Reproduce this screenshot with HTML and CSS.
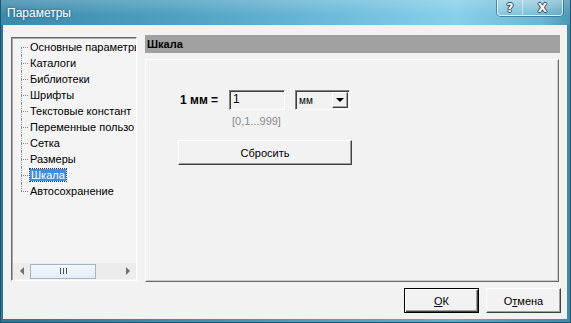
FILE: index.html
```html
<!DOCTYPE html>
<html lang="ru">
<head>
  <meta charset="UTF-8" />
  <title>Параметры</title>
  <link rel="stylesheet" href="styles.css">
</head>
<body>
  <div class="window">
    <!-- Title bar -->
    <div class="titlebar">
      <span class="title">Параметры</span>
      <div class="caption-buttons">
        <span class="cap-btn cap-help">?</span>
        <span class="cap-btn cap-close">X</span>
      </div>
    </div>

    <div class="client">
      <div class="main">
        <!-- Left tree with options -->
        <div class="tree">
          <ul class="tree-list">
            <li>Основные параметры</li>
            <li>Каталоги</li>
            <li>Библиотеки</li>
            <li>Шрифты</li>
            <li>Текстовые констант</li>
            <li>Переменные пользо</li>
            <li>Сетка</li>
            <li>Размеры</li>
            <li><span class="selected">Шкала</span></li>
            <li class="last">Автосохранение</li>
          </ul>
          <div class="hscroll">
            <span class="arrow arrow-left"></span>
            <span class="thumb"><span class="grip"></span></span>
            <span class="track"></span>
            <span class="arrow arrow-right"></span>
          </div>
        </div>

        <!-- Page of the selected item -->
        <div class="page">
          <div class="page-header">Шкала</div>
          <div class="page-box">
            <div class="scale-row">
              <span class="scale-label">1 мм =</span>
              <span class="field">1</span>
              <span class="combo">
                <span class="combo-text">мм</span>
                <span class="combo-btn"></span>
              </span>
            </div>
            <div class="hint">[0,1...999]</div>
            <button class="btn btn-reset">Сбросить</button>
          </div>
        </div>
      </div>

      <div class="footer">
        <button class="btn btn-default"><u>О</u>К</button>
        <button class="btn">О<u>т</u>мена</button>
      </div>
    </div>
  </div>
</body>
</html>
```

FILE: styles.css
```css
* {
  box-sizing: border-box;
  margin: 0;
  padding: 0;
}

body {
  font-family: "Liberation Sans", Arial, sans-serif;
  font-size: 11px;
  color: #000;
  background: #fff;
}

/* Window frame */
.window {
  width: 571px;
  height: 323px;
  display: flex;
  flex-direction: column;
  background: linear-gradient(to right, #2f7594 0%, #4b97b8 45%, #5eaccb 80%, #3f89a9 100%);
  border-left: 1px solid #1f5570;
  border-right: 1px solid #1f5570;
  border-bottom: 1px solid #1f5570;
}

.titlebar {
  height: 25px;
  display: flex;
  align-items: flex-start;
  padding: 0 7px 0 6px;
  background:
    linear-gradient(to bottom, rgba(255, 255, 255, 0.18) 0%, rgba(255, 255, 255, 0) 60%),
    linear-gradient(to right, #3c8aab 0%, #4f9fc0 30%, #6fbcdb 60%, #86d0ea 80%, #6db6d3 95%, #4d97b6 100%);
}

.title {
  color: #fff;
  font-size: 12px;
  line-height: 26px;
  text-shadow: 0 0 3px rgba(20, 60, 80, 0.7);
}

.caption-buttons {
  margin-left: auto;
  display: flex;
  height: 16px;
  border: 1px solid rgba(255, 255, 255, 0.7);
  border-top: none;
  border-radius: 0 0 4px 4px;
  background: linear-gradient(to bottom, rgba(255, 255, 255, 0.3), rgba(255, 255, 255, 0.08));
  box-shadow: 0 0 0 1px rgba(40, 90, 120, 0.6);
}

.cap-btn {
  display: flex;
  align-items: center;
  justify-content: center;
  color: #fff;
  font-family: "DejaVu Sans", sans-serif;
  font-weight: bold;
  font-size: 12px;
  text-shadow: 1px 0 0 #345, -1px 0 0 #345, 0 1px 0 #345, 0 -1px 0 #345;
}

.cap-help {
  width: 25px;
  border-right: 1px solid rgba(255, 255, 255, 0.5);
}

.cap-close {
  width: 39px;
}

/* Dialog body */
.client {
  flex: 1;
  margin: 0 3px 3px 2px;
  background: #f2f2f2;
  display: flex;
  flex-direction: column;
}

.main {
  height: 257px;
  display: flex;
  align-items: flex-start;
  padding-left: 8px;
}

/* Tree */
.tree {
  margin-top: 12px;
  width: 126px;
  height: 244px;
  display: flex;
  flex-direction: column;
  border-left: 1px solid #6a6a6a;
  border-top: 1px solid #6a6a6a;
  border-right: 1px solid #fff;
  border-bottom: 1px solid #fff;
  box-shadow: inset 1px 1px 0 #a8a8a8;
  background: #f4f4f4;
  overflow: hidden;
}

.tree-list {
  list-style: none;
  flex: 1;
  padding-top: 1px;
}

.tree-list li {
  position: relative;
  height: 16px;
  line-height: 16px;
  padding-left: 18px;
  white-space: nowrap;
}

/* dotted connector lines */
.tree-list li::before {
  content: "";
  position: absolute;
  left: 9px;
  top: 8px;
  width: 7px;
  border-top: 1px dotted #8a8a8a;
}

.tree-list li::after {
  content: "";
  position: absolute;
  left: 9px;
  top: 0;
  height: 16px;
  border-left: 1px dotted #8a8a8a;
}

.tree-list li:first-child::after {
  top: 8px;
  height: 8px;
}

.tree-list li.last::after {
  height: 8px;
}

.selected {
  background: #3f8fdd;
  color: #fff;
  padding: 0 1px;
  outline: 1px dotted #1d3f66;
}

.hscroll {
  height: 16px;
  margin: 0 0 1px 1px;
  display: flex;
  align-items: center;
  background: #ececec;
}

.arrow {
  width: 17px;
  height: 16px;
  display: flex;
  align-items: center;
  justify-content: center;
}

.arrow::before {
  content: "";
  border-top: 4px solid transparent;
  border-bottom: 4px solid transparent;
}

.arrow-left::before {
  border-right: 4px solid #707070;
}

.arrow-right::before {
  border-left: 4px solid #707070;
}

.thumb {
  width: 66px;
  height: 15px;
  border: 1px solid #a3b5c7;
  background: linear-gradient(to bottom, #f4f8fc, #e3ecf5);
  display: flex;
  align-items: center;
  justify-content: center;
}

.grip {
  width: 7px;
  height: 6px;
  background: repeating-linear-gradient(to right, #555 0, #555 1px, transparent 1px, transparent 3px);
}

.track {
  flex: 1;
}

/* Right page */
.page {
  margin-top: 10px;
  margin-left: 8px;
  width: 415px;
}

.page-header {
  height: 18px;
  line-height: 18px;
  background: #a0a0a0;
  font-weight: bold;
  padding-left: 2px;
}

.page-box {
  margin-top: 6px;
  width: 414px;
  height: 223px;
  border-top: 1px solid #fff;
  border-left: 1px solid #fff;
  border-right: 1px solid #6a6a6a;
  border-bottom: 1px solid #6a6a6a;
  box-shadow: inset -1px -1px 0 #c8c8c8;
  padding: 30px 0 0 33px;
}

.scale-row {
  display: flex;
  align-items: center;
  height: 20px;
}

.scale-label {
  font-size: 12px;
  font-weight: bold;
  width: 50px;
  padding-left: 1px;
}

.field,
.combo {
  height: 20px;
  border-top: 1px solid #828282;
  border-left: 1px solid #828282;
  border-right: 1px solid #fff;
  border-bottom: 1px solid #fff;
  box-shadow: inset 1px 1px 0 #404040;
  background: #f2f2f2;
}

.field {
  width: 56px;
  padding-left: 3px;
  font-size: 12px;
  line-height: 17px;
}

.combo {
  margin-left: 10px;
  width: 55px;
  display: flex;
  align-items: center;
  padding: 1px 1px 1px 3px;
  font-size: 10px;
}

.combo-text {
  flex: 1;
}

.combo-btn {
  width: 16px;
  height: 16px;
  border-top: 1px solid #fff;
  border-left: 1px solid #fff;
  border-right: 1px solid #404040;
  border-bottom: 1px solid #404040;
  box-shadow: inset -1px -1px 0 #a0a0a0;
  background: #f0f0f0;
  display: flex;
  align-items: center;
  justify-content: center;
}

.combo-btn::before {
  content: "";
  border-left: 4px solid transparent;
  border-right: 4px solid transparent;
  border-top: 4px solid #000;
}

.hint {
  color: #8a8a8a;
  margin: 2px 0 0 53px;
  height: 18px;
  line-height: 18px;
}

/* Push buttons */
.btn {
  font-family: "Liberation Sans", Arial, sans-serif;
  font-size: 11px;
  color: #000;
  height: 25px;
  background: #f2f2f2;
  border-top: 1px solid #fff;
  border-left: 1px solid #fff;
  border-right: 1px solid #404040;
  border-bottom: 1px solid #404040;
  box-shadow: inset -1px -1px 0 #a0a0a0;
}

.btn-reset {
  display: block;
  margin-top: 10px;
  margin-left: -1px;
  width: 174px;
}

.footer {
  display: flex;
  justify-content: flex-end;
  gap: 7px;
  padding: 6px 6px 0 0;
}

.footer .btn {
  width: 75px;
}

.btn-default {
  border: 1px solid #000;
  box-shadow: inset 1px 1px 0 #fff, inset -1px -1px 0 #404040, inset -2px -2px 0 #a0a0a0;
}
```
